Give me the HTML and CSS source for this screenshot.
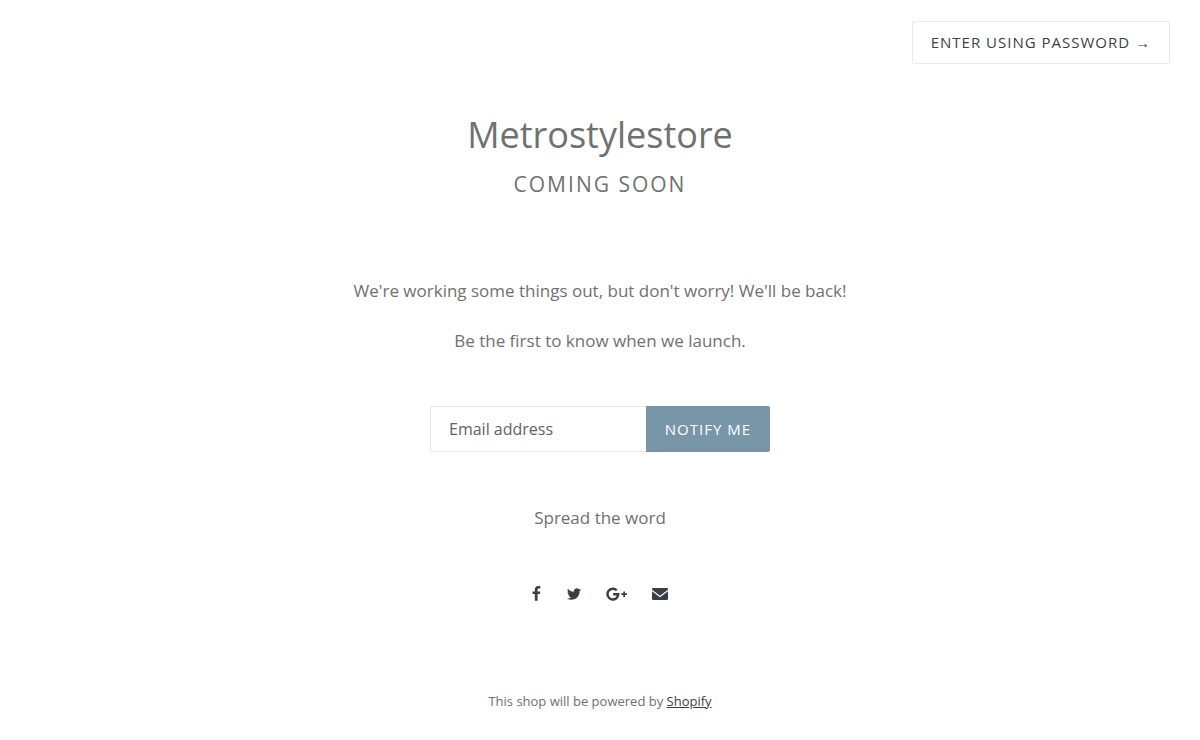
FILE: index.html
```
<!DOCTYPE html>
<html lang="en">
  <head>
    <meta charset="utf-8">
    <meta name="viewport" content="width=device-width, initial-scale=1">
    <title>Metrostylestore</title>
    <link rel="stylesheet" href="styles.css">
  </head>
  <body>
    <header class="password-header">
      <a href="#login" class="btn btn--secondary">Enter using password <span class="arrow">→</span></a>
    </header>
    <main class="password-main">
      <h1 class="shop-name">Metrostylestore</h1>
      <h2 class="coming-soon">Coming soon</h2>
      <p class="message">We're working some things out, but don't worry! We'll be back!</p>
      <form class="signup-form">
        <label for="email" class="signup-label">Be the first to know when we launch.</label>
        <div class="input-group">
          <input type="email" id="email" class="input-field" placeholder="Email address">
          <button type="submit" class="btn btn--primary">Notify me</button>
        </div>
      </form>
      <section class="social">
        <h3 class="social-title">Spread the word</h3>
        <ul class="social-list">
          <li>
            <a href="#facebook" aria-label="Facebook">
              <svg width="10" height="16" viewBox="416 0 1120 1792"><path d="M1343 12v264h-157q-86 0-116 36t-30 108v189h293l-39 296h-254v759h-306v-759h-255v-296h255v-218q0-186 104-288.500t277-102.500q147 0 228 12z"/></svg>
            </a>
          </li>
          <li>
            <a href="#twitter" aria-label="Twitter">
              <svg width="16" height="16" viewBox="0 0 1792 1792"><path d="M1684 408q-67 98-162 167 1 14 1 42 0 130-38 259.500t-115.500 248.500-184.500 210.500-258 146-323 54.500q-271 0-496-145 35 4 78 4 225 0 401-138-105-2-188-64.500t-114-159.500q33 5 61 5 43 0 85-11-112-23-185.500-111.500t-73.500-205.500v-4q68 38 146 41-66-44-105-115t-39-154q0-88 44-163 121 149 294.500 238.500t371.500 99.500q-8-38-8-74 0-134 94.500-228.500t228.500-94.500q140 0 236 102 109-21 205-78-37 115-142 178 93-10 186-50z"/></svg>
            </a>
          </li>
          <li>
            <a href="#google-plus" aria-label="Google Plus">
              <svg width="22" height="16" viewBox="0 0 22 16"><path class="stroke" d="M10.700 4.300A5.400 5.400 0 1 0 12.300 8.300H7.200"/><path d="M17.300 5.400h1.700v1.900h2v1.700h-2v1.900h-1.700V9h-2V7.300h2z"/></svg>
            </a>
          </li>
          <li>
            <a href="#email" aria-label="Email">
              <svg width="16" height="16" viewBox="0 0 16 16"><path d="M1 2h14q1 0 1 1v.700L8 9.700 0 3.700V3q0-1 1-1zM0 5.200l8 6.100 8-6.100V13q0 1-1 1H1q-1 0-1-1z"/></svg>
            </a>
          </li>
        </ul>
      </section>
    </main>
    <footer class="password-footer">
      This shop will be powered by <a href="#shopify">Shopify</a>
    </footer>
  </body>
</html>
```
FILE: styles.css
```
* {
  box-sizing: border-box;
  margin: 0;
  padding: 0;
}

body {
  background: #fff;
  color: #6f7170;
  font-family: "Open Sans", "Noto Sans", sans-serif;
  font-size: 17px;
  line-height: 26px;
  text-align: center;
}

a {
  color: #3a3f44;
}

.password-header {
  display: flex;
  justify-content: flex-end;
  padding: 21px 30px;
}

.btn {
  border: 1px solid transparent;
  border-radius: 2px;
  padding: 0 18px;
  font-family: inherit;
  font-size: 15px;
  letter-spacing: 1px;
  text-decoration: none;
  text-transform: uppercase;
  white-space: nowrap;
  cursor: pointer;
}

.btn--secondary {
  border-color: #e8e9eb;
  line-height: 41px;
}

.btn--primary {
  background: #7796a8;
  border-radius: 0 2px 2px 0;
  color: #fff;
}

.arrow {
  font-family: "Liberation Sans", sans-serif;
  line-height: 1;
}

.password-main {
  padding: 28px 30px 0;
}

.shop-name {
  font-size: 36px;
  font-weight: 400;
  line-height: 44px;
}

.coming-soon {
  margin-top: 14px;
  font-size: 21px;
  font-weight: 400;
  letter-spacing: 2px;
  line-height: 26px;
  text-transform: uppercase;
}

.message {
  margin-top: 81px;
}

.signup-form {
  max-width: 340px;
  margin: 24px auto 0;
}

.input-group {
  display: flex;
  height: 46px;
  margin-top: 52px;
}

.input-field {
  flex: 1;
  min-width: 0;
  padding: 0 18px;
  border: 1px solid #e8e9eb;
  border-right: 0;
  border-radius: 2px 0 0 2px;
  color: #3a3f44;
  font-family: inherit;
  font-size: 16px;
}

.input-field::placeholder {
  color: #606366;
  opacity: 1;
}

.social {
  margin-top: 53px;
}

.social-title {
  font-size: 17px;
  font-weight: 400;
}

.social-list {
  display: flex;
  justify-content: center;
  gap: 24px;
  margin-top: 55px;
  list-style: none;
}

.social-list a {
  display: block;
}

.social-list svg {
  display: block;
  fill: #3a3f44;
}

.social-list .stroke {
  fill: none;
  stroke: #3a3f44;
  stroke-width: 2.4;
}

.password-footer {
  padding: 86px 30px 26px;
  font-size: 13px;
}
```
